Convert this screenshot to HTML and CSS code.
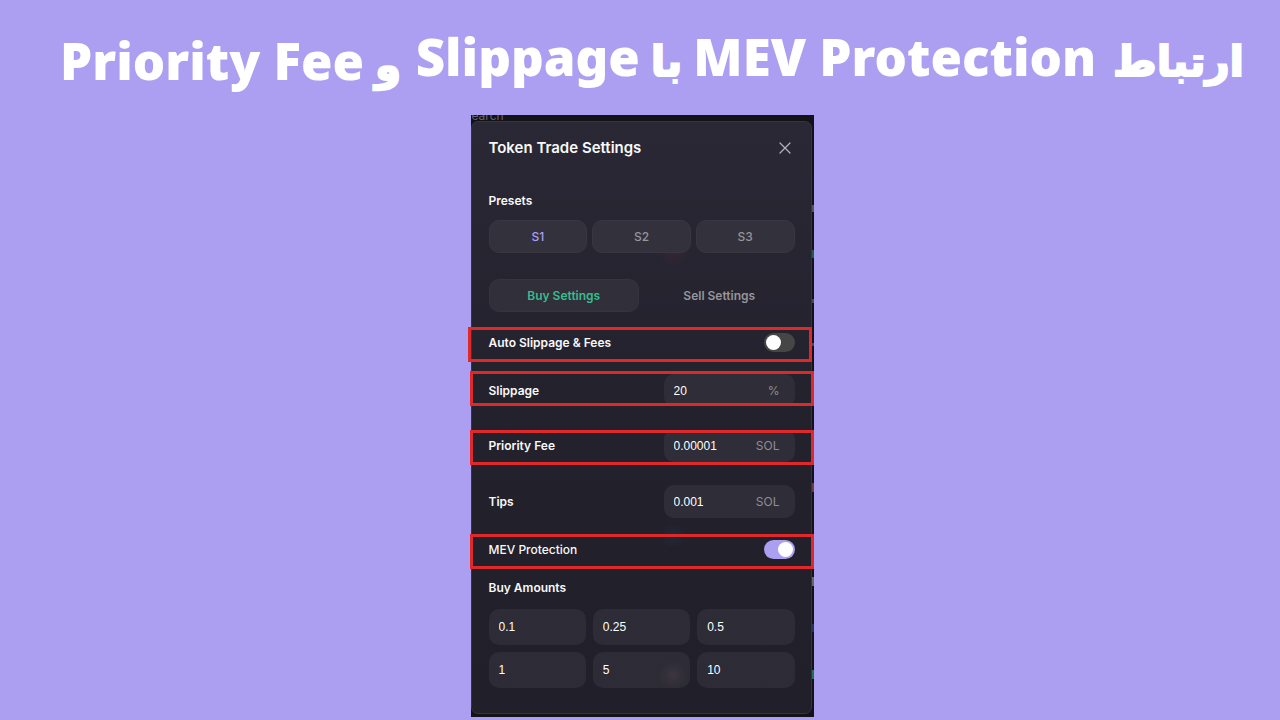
FILE: index.html
```html
<!DOCTYPE html>
<html lang="fa">
<head>
    <meta charset="UTF-8">
    <meta name="viewport" content="width=device-width, initial-scale=1.0">
    <title>Token Trade Settings</title>
    <link rel="stylesheet" href="styles.css">
</head>
<body>

    <h1 class="headline" dir="rtl">
        <span class="headline-part">
            <span class="fa first">ارتباط</span>
            <span class="en" dir="ltr">MEV Protection</span>
            <span class="fa">با</span>
            <span class="en" dir="ltr">Slippage</span>
        </span>
        <span class="headline-part lower">
            <span class="fa">و</span>
            <span class="en" dir="ltr">Priority Fee</span>
        </span>
    </h1>

    <main class="frame" lang="en">
        <div class="search-strip"><span>earch</span></div>

        <form class="panel">
            <header class="panel-header">
                <h2>Token Trade Settings</h2>
                <button type="button" class="close" aria-label="Close">
                    <svg viewBox="0 0 12 12" width="12" height="12">
                        <path d="M1 1 L11 11 M11 1 L1 11" fill="none" stroke="currentColor" stroke-width="1.2" stroke-linecap="round"/>
                    </svg>
                </button>
            </header>

            <h3>Presets</h3>
            <div class="presets">
                <button type="button" class="pill active">S1</button>
                <button type="button" class="pill">S2</button>
                <button type="button" class="pill">S3</button>
            </div>

            <div class="tabs">
                <button type="button" class="tab active">Buy Settings</button>
                <button type="button" class="tab">Sell Settings</button>
            </div>

            <div class="marked auto">
                <div class="row switch-row">
                    <label for="auto">Auto Slippage &amp; Fees</label>
                    <input type="checkbox" class="switch" id="auto">
                </div>
            </div>

            <div class="marked slippage">
                <div class="row">
                    <label for="slippage">Slippage</label>
                    <div class="field">
                        <input type="text" id="slippage" value="20">
                        <span>%</span>
                    </div>
                </div>
            </div>

            <div class="marked priority">
                <div class="row">
                    <label for="priority">Priority Fee</label>
                    <div class="field">
                        <input type="text" id="priority" value="0.00001">
                        <span>SOL</span>
                    </div>
                </div>
            </div>

            <div class="row tips">
                <label for="tips">Tips</label>
                <div class="field">
                    <input type="text" id="tips" value="0.001">
                    <span>SOL</span>
                </div>
            </div>

            <div class="marked mev">
                <div class="row switch-row">
                    <label for="mev">MEV Protection</label>
                    <input type="checkbox" class="switch" id="mev" checked>
                </div>
            </div>

            <h3>Buy Amounts</h3>
            <div class="amounts">
                <input type="text" aria-label="Amount 1" value="0.1">
                <input type="text" aria-label="Amount 2" value="0.25">
                <input type="text" aria-label="Amount 3" value="0.5">
                <input type="text" aria-label="Amount 4" value="1">
                <input type="text" aria-label="Amount 5" value="5">
                <input type="text" aria-label="Amount 6" value="10">
            </div>
        </form>
    </main>

</body>
</html>
```

FILE: styles.css
```css
* {
    box-sizing: border-box;
}
body {
    margin: 0;
    background-color: #ac9ff1;
    font-family: Inter, "Liberation Sans", sans-serif;
    font-size: 12px;
    color: #f8f8fa;
}
h1, h2, h3 {
    margin: 0;
}
button, input {
    font-family: inherit;
    font-size: inherit;
    color: inherit;
    border: none;
    margin: 0;
    padding: 0;
    background: none;
}
button {
    cursor: pointer;
}

/* headline */
.headline {
    display: flex;
    justify-content: space-between;
    height: 115px;
    padding: 18px 36px 0 60px;
    color: #fff;
    font-family: "Noto Sans", "DejaVu Sans", sans-serif;
    font-size: 51px;
    font-weight: 900;
    line-height: 76px;
    white-space: nowrap;
}
.headline-part {
    display: flex;
    align-items: baseline;
    gap: 11px;
}
.headline-part.lower {
    padding-top: 4px;
}
.fa {
    font-family: "DejaVu Sans", sans-serif;
    font-size: 42px;
    -webkit-text-stroke: 2px #fff;
}
.fa.first {
    margin-left: 6px;
}

.frame {
    width: 343px;
    max-width: 100%;
    margin: 0 auto;
    padding: 0 2px 3px 0;
    position: relative;
    left: 2px;
    background:
        linear-gradient(#55535e, #55535e) right 90px / 2px 7px no-repeat,
        linear-gradient(#24594f, #24594f) right 135px / 2px 8px no-repeat,
        linear-gradient(#4a4a50, #4a4a50) right 184px / 2px 4px no-repeat,
        linear-gradient(#4a4a50, #4a4a50) right 228px / 2px 3px no-repeat,
        linear-gradient(#6b3f38, #6b3f38) right 368px / 2px 9px no-repeat,
        linear-gradient(#66666c, #66666c) right 462px / 2px 9px no-repeat,
        linear-gradient(#25335a, #25335a) right 509px / 2px 8px no-repeat,
        linear-gradient(#256b57, #256b57) right 555px / 2px 9px no-repeat,
        #121218;
}
.search-strip {
    height: 6px;
    overflow: hidden;
    color: #66666b;
}
.search-strip span {
    display: block;
    margin-top: -7px;
    padding-left: 1px;
    line-height: 15px;
}
.panel {
    padding: 16px 16px 25px 17px;
    border: 1px solid #353440;
    border-radius: 7px;
    background:
        radial-gradient(circle 14px at 201px 553px, rgba(120, 90, 90, 0.18), transparent),
        radial-gradient(circle 16px at 201px 130px, rgba(150, 40, 60, 0.14), transparent),
        radial-gradient(circle 14px at 201px 414px, rgba(30, 90, 130, 0.14), transparent),
        linear-gradient(#292834, #22212c 50%, #201f2a);
}
.panel-header {
    display: flex;
    justify-content: space-between;
    align-items: center;
    height: 20px;
    margin-bottom: 35px;
}
h2 {
    font-size: 15px;
    font-weight: 600;
    line-height: 20px;
}
h3 {
    font-size: 12px;
    font-weight: 600;
    line-height: 16px;
}
.close {
    display: flex;
    padding: 0 4px;
    color: #b4b4ba;
}

/* buttons */
.presets, .tabs {
    display: flex;
    gap: 5px;
    margin-top: 11px;
}
.pill, .tab {
    flex: 1;
    height: 33px;
    border: 1px solid transparent;
    border-radius: 10px;
    color: #95959b;
    font-weight: 500;
}
.pill {
    background-color: #32313c;
    border-color: #373641;
}
.pill.active {
    color: #ab9ff2;
}
.tabs {
    margin-top: 26px;
    margin-bottom: 15px;
}
.tab {
    font-weight: 600;
}
.tab.active {
    background-color: #302f3a;
    border-color: #353440;
    color: #37bd8c;
}

/* setting rows */
.row {
    flex: 1;
    display: flex;
    justify-content: space-between;
    align-items: center;
    height: 33px;
}
.row label {
    font-weight: 600;
}
.switch-row {
    height: 25px;
}
.marked {
    display: flex;
    align-items: flex-start;
    height: 35px;
    margin: 0 -19px;
    padding: 0 16px;
    border: 3px solid #df2829;
    overflow: hidden;
}
.marked.auto {
    margin: 0 -17px 9px -21px;
    padding: 0 14px 0 18px;
}
.marked.slippage {
    margin-bottom: 24px;
}
.marked.priority {
    align-items: flex-end;
    margin-bottom: 20px;
}
.tips {
    margin-bottom: 16px;
}
.marked.mev {
    margin-bottom: 11px;
}
.marked.mev label {
    font-weight: 500;
}
.field {
    display: flex;
    align-items: center;
    width: 131px;
    height: 33px;
    padding: 0 15px 0 10px;
    border-radius: 10px;
    background-color: #2e2d38;
}
.field input, .amounts input {
    min-width: 0;
    font-family: "Liberation Sans", sans-serif;
    color: #fff;
}
.field input {
    flex: 1;
}
.field span {
    color: #8f8f95;
}
.switch {
    appearance: none;
    display: flex;
    width: 31px;
    height: 19px;
    padding: 2px;
    border-radius: 10px;
    background-color: #464646;
}
.switch::before {
    content: "";
    width: 15px;
    height: 15px;
    border-radius: 50%;
    background-color: #fff;
}
.switch:checked {
    justify-content: flex-end;
    background-color: #ab9ff2;
}

/* amounts */
.amounts {
    display: grid;
    grid-template-columns: repeat(3, 1fr);
    gap: 7px;
    margin-top: 13px;
}
.amounts input {
    height: 36px;
    padding: 0 10px;
    border-radius: 10px;
    background-color: rgba(255, 255, 255, 0.06);
}
```
